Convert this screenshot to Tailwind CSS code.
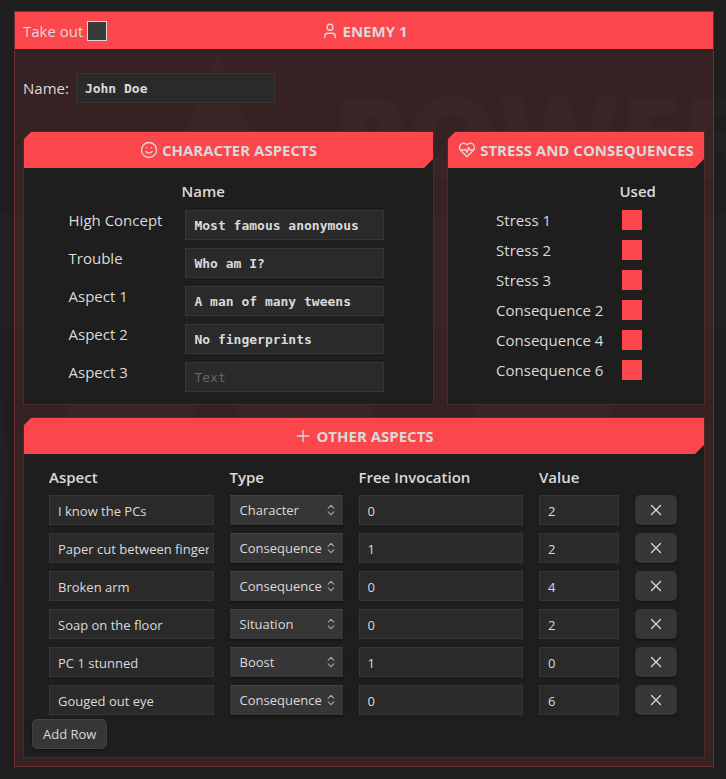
<!DOCTYPE html>
<html lang="en">
<head>
<meta charset="utf-8">
<title>Enemy 1</title>
<script src="https://cdn.jsdelivr.net/npm/@tailwindcss/browser@4"></script>
</head>
<body class="relative min-h-screen bg-[#1e1e1e] pl-3.5 pr-3 pt-[11px] pb-3 text-[15px]/6 text-[#dadada] font-['Open_Sans','Noto_Sans',sans-serif] overflow-x-hidden">

<!-- Faint backdrop artwork -->
<svg class="pointer-events-none absolute inset-0 h-full w-full" aria-hidden="true" fill="#fff" fill-opacity="0.014">
  <path d="M218 52 L258 150 L178 150 Z"/>
  <text x="333" y="180" font-family="Open Sans" font-weight="800" font-size="116">POWER</text>
  <rect x="0" y="214" width="726" height="114"/>
  <path d="M68 400h132l-14 40H60zM233 400h137l12 40H247zM475 400h135v40H475zM0 395q14 40 0 215z"/>
</svg>

<main class="relative border border-[#6c2f31] bg-[#fb464c]/11">
  <header class="grid grid-cols-[1fr_auto_1fr] items-center bg-[#fb464c] px-2 h-[37px]">
    <div class="flex items-center gap-1">
      <label for="takeout">Take out</label>
      <input id="takeout" type="checkbox" class="size-5 appearance-none border border-[#dadada] bg-[#3a3a3a] checked:bg-[#dadada]">
    </div>
    <h1 class="flex items-center gap-1 font-bold">
      <svg class="size-[18px]" viewBox="0 0 24 24" fill="none" stroke="currentColor" stroke-width="1.75" stroke-linecap="round" stroke-linejoin="round" aria-hidden="true"><path d="M19 21v-2a4 4 0 0 0-4-4H9a4 4 0 0 0-4 4v2"/><circle cx="12" cy="7" r="4"/></svg>
      ENEMY 1
    </h1>
  </header>

  <div class="px-2 pt-6 pb-2">
    <div class="flex items-center gap-[7px]">
      <label for="name">Name:</label>
      <input id="name" value="John Doe" class="h-[30px] w-[199px] border border-[#363636] bg-[#2a2a2a] px-2 font-['DejaVu_Sans_Mono',monospace] text-[13px] font-bold outline-none">
    </div>

    <div class="mt-7 grid grid-cols-[411fr_258fr] gap-[13px]">
      <section class="border border-[#4f2a2b] bg-[#1e1e1e] [clip-path:polygon(9px_0,100%_0,100%_100%,0_100%,0_9px)]">
        <h2 class="flex h-9 items-center justify-center gap-1 bg-[#fb464c] font-bold [clip-path:polygon(0_0,100%_0,100%_calc(100%-9px),calc(100%-9px)_100%,0_100%)]">
          <svg class="size-[18px]" viewBox="0 0 24 24" fill="none" stroke="currentColor" stroke-width="1.75" stroke-linecap="round" stroke-linejoin="round" aria-hidden="true"><circle cx="12" cy="12" r="10"/><path d="M8 14s1.5 2 4 2 4-2 4-2"/><path d="M9 9h.01M15 9h.01"/></svg>
          CHARACTER ASPECTS
        </h2>
        <div class="px-2 pt-2 pb-2">
          <table class="mx-auto">
            <thead><tr class="h-[30px]"><td></td><th scope="col" class="text-left font-semibold">Name</th></tr></thead>
            <tbody id="character"></tbody>
          </table>
        </div>
      </section>

      <section class="border border-[#4f2a2b] bg-[#1e1e1e] [clip-path:polygon(9px_0,100%_0,100%_100%,0_100%,0_9px)]">
        <h2 class="flex h-9 items-center justify-center gap-1 whitespace-nowrap bg-[#fb464c] font-bold [clip-path:polygon(0_0,100%_0,100%_calc(100%-9px),calc(100%-9px)_100%,0_100%)]">
          <svg class="size-[18px]" viewBox="0 0 24 24" fill="none" stroke="currentColor" stroke-width="1.75" stroke-linecap="round" stroke-linejoin="round" aria-hidden="true"><path d="M19 14c1.49-1.46 3-3.21 3-5.5A5.5 5.5 0 0 0 16.5 3c-1.76 0-3 .5-4.5 2-1.500-1.500-2.740-2-4.500-2A5.500 5.500 0 0 0 2 8.500c0 2.300 1.500 4.050 3 5.500l7 7Z"/><path d="M3.220 12H9.500l.500-1 2 4.500 2-7 1.500 3.500h5.270"/></svg>
          STRESS AND CONSEQUENCES
        </h2>
        <div class="px-2 pt-2">
          <table class="mx-auto">
            <thead><tr class="h-[29px]"><td></td><th scope="col" class="text-left font-semibold">Used</th></tr></thead>
            <tbody id="stress"></tbody>
          </table>
        </div>
      </section>
    </div>

    <section class="mt-3 border border-[#4f2a2b] bg-[#1e1e1e] [clip-path:polygon(9px_0,100%_0,100%_100%,0_100%,0_9px)]">
      <h2 class="flex h-9 items-center justify-center gap-1 bg-[#fb464c] font-bold [clip-path:polygon(0_0,100%_0,100%_calc(100%-9px),calc(100%-9px)_100%,0_100%)]">
        <svg class="size-[18px]" viewBox="0 0 24 24" fill="none" stroke="currentColor" stroke-width="1.75" stroke-linecap="round" aria-hidden="true"><path d="M4.500 12h15M12 4.500v15"/></svg>
        OTHER ASPECTS
      </h2>
      <div class="p-2">
        <div class="pl-[9px] pr-[11px]">
          <table class="w-full table-fixed">
            <colgroup><col><col class="w-[129px]"><col><col class="w-24"><col class="w-[58px]"></colgroup>
            <thead>
              <tr class="h-[29px] text-left">
                <th scope="col" class="px-2 font-semibold">Aspect</th>
                <th scope="col" class="px-2 font-semibold">Type</th>
                <th scope="col" class="px-2 font-semibold whitespace-nowrap">Free Invocation</th>
                <th scope="col" class="px-2 font-semibold">Value</th>
                <td></td>
              </tr>
            </thead>
            <tbody id="other"></tbody>
          </table>
        </div>
        <button type="button" class="block h-[30px] rounded-[5px] border border-[#424242] bg-[#363636] px-[10px] text-[13px]/5 shadow-[0_1px_2px_#0008]">Add Row</button>
      </div>
    </section>
  </div>
</main>

<script>
  const aspects = [["High Concept", "Most famous anonymous"], ["Trouble", "Who am I?"], ["Aspect 1", "A man of many tweens"], ["Aspect 2", "No fingerprints"], ["Aspect 3", ""]];
  document.getElementById("character").innerHTML = aspects.map(([label, value], i) => `
    <tr>
      <td class="pr-[19px] pt-0.5 align-top"><label for="aspect${i}">${label}</label></td>
      <td class="p-1"><input id="aspect${i}" value="${value}" placeholder="Text" class="block h-[30px] w-[199px] border border-[#363636] bg-[#2a2a2a] px-2 font-['DejaVu_Sans_Mono',monospace] text-[13px] font-bold outline-none placeholder:font-normal placeholder:text-[#666]"></td>
    </tr>`).join("");

  const stress = ["Stress 1", "Stress 2", "Stress 3", "Consequence 2", "Consequence 4", "Consequence 6"];
  document.getElementById("stress").innerHTML = stress.map((label, i) => `
    <tr class="h-[30px]">
      <td class="pr-4"><label for="stress${i}">${label}</label></td>
      <td class="px-[3px]"><input id="stress${i}" type="checkbox" checked class="block size-5 appearance-none border border-[#dadada] bg-[#3a3a3a] checked:border-[#fb464c] checked:bg-[#fb464c]"></td>
    </tr>`).join("");

  const types = ["Character", "Consequence", "Situation", "Boost"];
  const rows = [["I know the PCs", "Character", 0, 2], ["Paper cut between fingers", "Consequence", 1, 2], ["Broken arm", "Consequence", 0, 4], ["Soap on the floor", "Situation", 0, 2], ["PC 1 stunned", "Boost", 1, 0], ["Gouged out eye", "Consequence", 0, 6]];
  const field = "block h-[30px] w-full border border-[#363636] bg-[#2a2a2a] pt-0.5 pl-2 pr-1 text-[13px] outline-none";
  document.getElementById("other").innerHTML = rows.map(([name, type, free, value]) => `
    <tr>
      <td class="px-2 py-1"><input aria-label="Aspect" value="${name}" class="${field}"></td>
      <td class="px-2 py-1"><div class="relative">
        <select aria-label="Type" class="block h-[30px] w-full appearance-none border border-[#363636] border-t-[#424242] bg-[#363636] pl-[9px] text-[13px] shadow-[0_1px_2px_#0008] outline-none">${types.map(t => `<option${t === type ? " selected" : ""}>${t}</option>`).join("")}</select>
        <svg class="pointer-events-none absolute top-2 right-[5px] size-[14px] text-[#b3b3b3]" viewBox="0 0 24 24" fill="none" stroke="currentColor" stroke-width="1.75" stroke-linecap="round" stroke-linejoin="round" aria-hidden="true"><path d="m7 15 5 5 5-5M7 9l5-5 5 5"/></svg>
      </div></td>
      <td class="px-2 py-1"><input aria-label="Free Invocation" value="${free}" class="${field}"></td>
      <td class="px-2 py-1"><input aria-label="Value" value="${value}" class="${field}"></td>
      <td class="px-2 py-1"><button type="button" aria-label="Remove row" class="flex h-[30px] w-full items-center justify-center rounded-[5px] bg-[#363636] shadow-[0_1px_2px_#0008]">
        <svg class="size-[18px]" viewBox="0 0 24 24" fill="none" stroke="currentColor" stroke-width="1.75" stroke-linecap="round" aria-hidden="true"><path d="M18 6 6 18M6 6l12 12"/></svg>
      </button></td>
    </tr>`).join("");
</script>
</body>
</html>
